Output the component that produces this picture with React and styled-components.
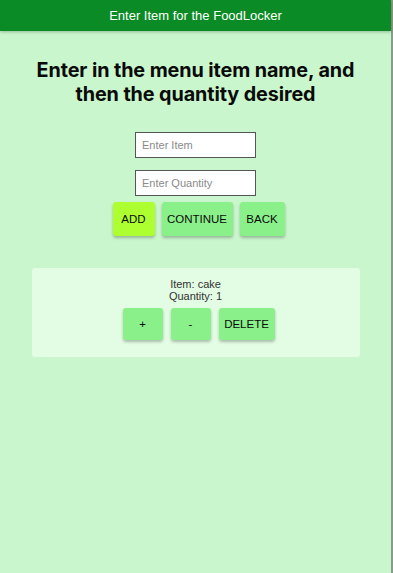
import React from 'react';
import styled, { createGlobalStyle } from 'styled-components';

const GlobalStyle = createGlobalStyle`
  html, body {
    margin: 0;
    padding: 0;
    background: #c9f6cc;
  }
  * { box-sizing: border-box; }
`;

const SPage = styled.div`
  width: 393px;
  height: 573px;
  background: #c9f6cc;
  border-right: 2px solid #8a9a8c;
  font-family: "Liberation Sans", Arial, sans-serif;
  display: flex;
  flex-direction: column;
  align-items: center;
`;

const SHeader = styled.header`
  width: 100%;
  height: 31px;
  background: #0b8b25;
  color: #ffffff;
  font-size: 13px;
  display: flex;
  align-items: center;
  justify-content: center;
  box-shadow: 0 1px 3px rgba(0, 0, 0, 0.25);
`;

const STitle = styled.h1`
  margin: 27px 0 0;
  font-family: Inter, "Liberation Sans", sans-serif;
  font-weight: 700;
  font-size: 19.8px;
  line-height: 24px;
  text-align: center;
  color: #0a0a0a;
  letter-spacing: -0.1px;
`;

const SForm = styled.div`
  margin-top: 26px;
  display: flex;
  flex-direction: column;
  align-items: center;
  gap: 12px;
`;

const SInput = styled.input`
  width: 121px;
  height: 26px;
  border: 1px solid #555;
  background: #fff;
  padding: 0 6px;
  font-family: "Liberation Sans", Arial, sans-serif;
  font-size: 11px;
  outline: none;
  &::placeholder { color: #8a8a8a; }
`;

const SButtonRow = styled.div`
  display: flex;
  gap: ${p => p.$gap || 7}px;
  justify-content: center;
  padding-left: 6px;
  margin-top: ${p => p.$top || 0}px;
`;

const SButton = styled.button`
  height: ${p => p.$h || 34}px;
  width: ${p => p.$w}px;
  padding: 0;
  border: none;
  border-radius: 3px;
  background: ${p => (p.$primary ? '#adff2f' : '#8af08a')};
  color: #0a0a0a;
  font-family: "Liberation Sans", Arial, sans-serif;
  font-size: 11.5px;
  text-transform: uppercase;
  box-shadow: 0 2px 3px rgba(0, 0, 0, 0.25);
  cursor: pointer;
`;

const SCard = styled.section`
  margin-top: 32px;
  width: 328px;
  height: 89px;
  background: #e3fce4;
  border-radius: 3px;
  display: flex;
  flex-direction: column;
  align-items: center;
  padding-top: 10px;
`;

const SInfo = styled.p`
  margin: 0;
  font-size: 11px;
  line-height: 12px;
  color: #333;
  text-align: center;
`;

export default function App() {
  return (
    <>
      <GlobalStyle />
      <SPage>
        <SHeader>Enter Item for the FoodLocker</SHeader>
        <STitle>
          Enter in the menu item name, and
          <br />
          then the quantity desired
        </STitle>
        <SForm>
          <SInput placeholder="Enter Item" />
          <SInput placeholder="Enter Quantity" />
        </SForm>
        <SButtonRow $top={6}>
          <SButton $primary $w={42}>Add</SButton>
          <SButton $w={71}>Continue</SButton>
          <SButton $w={45}>Back</SButton>
        </SButtonRow>
        <SCard>
          <SInfo>Item: cake</SInfo>
          <SInfo>Quantity: 1</SInfo>
          <SButtonRow $top={6} $gap={8}>
            <SButton $w={40} $h={32}>+</SButton>
            <SButton $w={40} $h={32}>-</SButton>
            <SButton $w={56} $h={32}>Delete</SButton>
          </SButtonRow>
        </SCard>
      </SPage>
    </>
  );
}
